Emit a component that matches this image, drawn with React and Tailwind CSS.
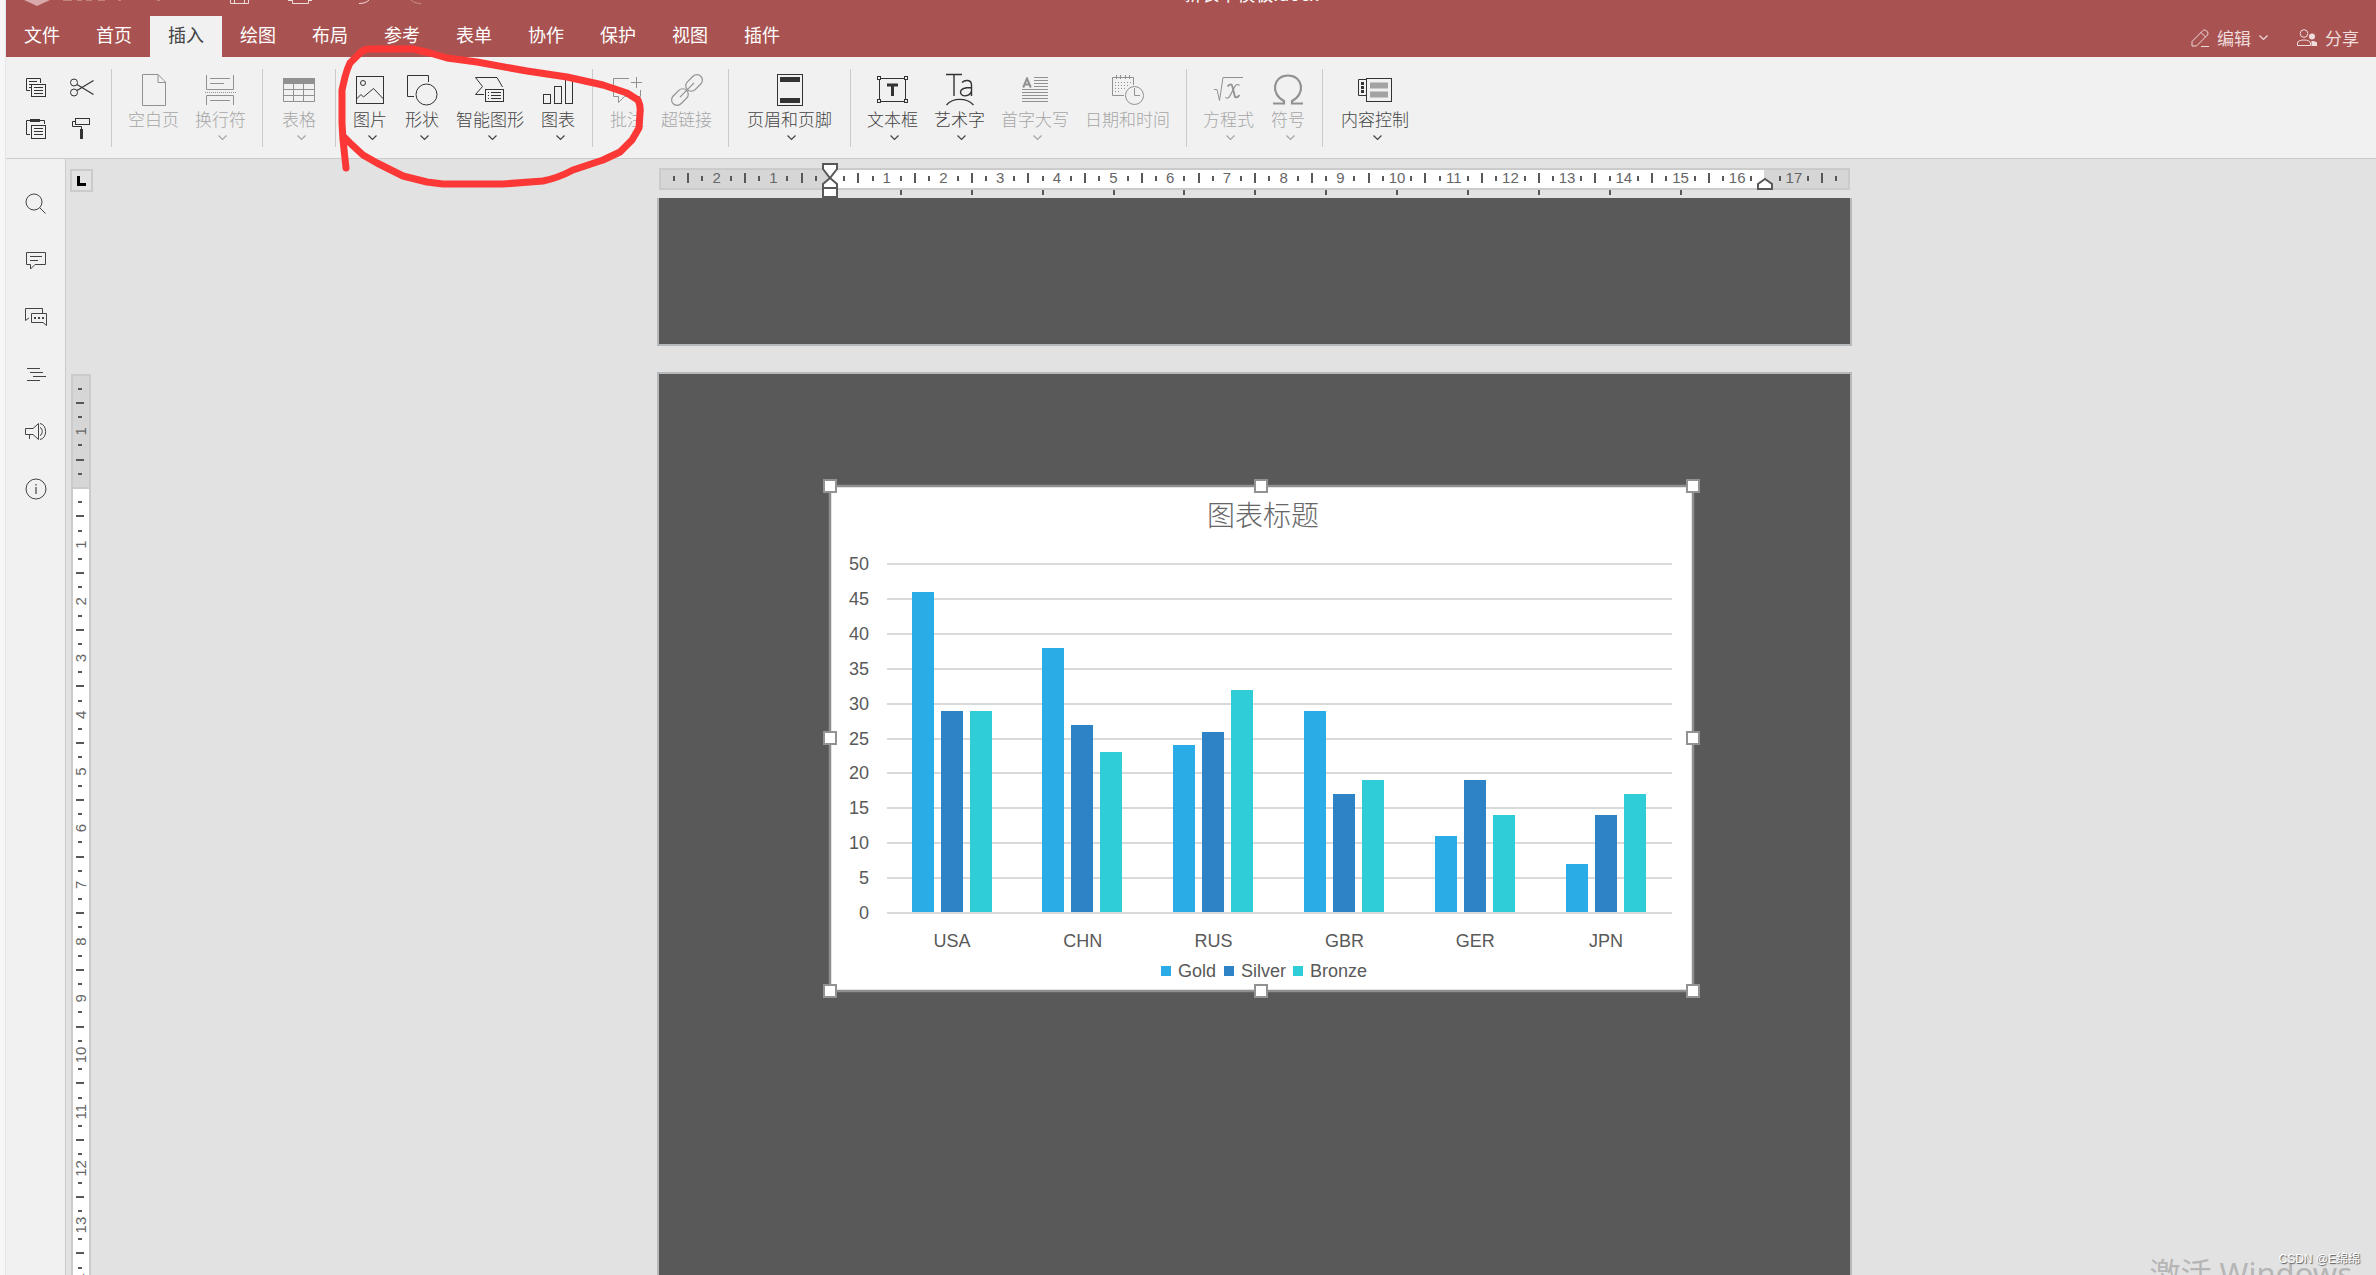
import React from "react";

const CM = 56.7;
const UI = "font-['Noto_Sans_CJK_SC',sans-serif]";

function Svg({ w, h, children, className = "" }) {
  return (
    <svg width={w} height={h} viewBox={`0 0 ${w} ${h}`} fill="none" stroke="currentColor" strokeWidth="1" className={`shrink-0 ${className}`} aria-hidden="true">
      {children}
    </svg>
  );
}

const Chevron = () => (
  <Svg w={9} h={6}><path d="M0.5 0.5 L4.5 4.5 L8.5 0.5" strokeWidth="1.2" /></Svg>
);

/* ---------- clipboard icons ---------- */
const CopyIcon = () => (
  <Svg w={20} h={20}>
    <path d="M4 12.5 H0.5 V0.5 H14.5 V5" />
    <path d="M3 3.5 H11 M3 6.5 H5 M3 9.5 H5" />
    <rect x="5.5" y="6.5" width="14" height="12" />
    <path d="M8 9.5 H17 M8 12.5 H17 M8 15.5 H17" />
  </Svg>
);
const CutIcon = () => (
  <Svg w={24} h={20}>
    <circle cx="4" cy="4.5" r="3.5" /><circle cx="4" cy="14.5" r="3.5" />
    <path d="M7 6.5 L23.5 16.5 M7 12.5 L23.5 2.5" strokeWidth="1.2" />
  </Svg>
);
const PasteIcon = () => (
  <Svg w={20} h={20}>
    <path d="M4 15.5 H0.5 V1.5 H18.5 V5" />
    <rect x="4" y="0" width="10" height="3" fill="currentColor" stroke="none" />
    <rect x="5.5" y="6.5" width="14" height="13" />
    <path d="M8 9.5 H17 M8 12.5 H17 M8 15.5 H17" />
  </Svg>
);
const RollerIcon = () => (
  <Svg w={18} h={22}>
    <rect x="3.5" y="0.5" width="14" height="6" />
    <path d="M3 3.5 H0.5 V8.5 H9.5 V11" />
    <rect x="8" y="11" width="3" height="10" fill="currentColor" stroke="none" />
  </Svg>
);

/* ---------- ribbon icons ---------- */
const BlankPage = () => (
  <Svg w={24} h={32}><path d="M0.5 0.5 H16 L23.5 8 V31.5 H0.5 Z M16 0.5 V8.5 H23.5" /></Svg>
);
const BreakIcon = () => (
  <Svg w={31} h={32}>
    <path d="M1.5 1 V15.5 H28.5 V1 M5 4.5 H25 M5 9.5 H19" />
    <path d="M0 18.5 H31" strokeDasharray="1 1" />
    <path d="M1.5 31 V21.5 H28.5 V31 M5 26.5 H25" />
  </Svg>
);
const TableIcon = () => (
  <Svg w={32} h={28}>
    <rect x="0" y="2" width="32" height="6" fill="currentColor" stroke="none" />
    <path d="M0.5 8 V25.5 H31.5 V8 M0 13.5 H32 M0 19.5 H32 M10.5 8 V25 M20.5 8 V25" />
  </Svg>
);
const PictureIcon = () => (
  <Svg w={28} h={28}>
    <rect x="0.5" y="0.5" width="27" height="27" /><circle cx="7" cy="7" r="2.5" />
    <path d="M0.5 23 L5 18.5 L7.5 21 L17.5 12.5 L27.5 23" />
  </Svg>
);
const ShapeIcon = () => (
  <Svg w={31} h={31}>
    <path d="M7 21.5 H0.5 V0.5 H21.5 V7" /><circle cx="19.5" cy="19.5" r="10.5" />
  </Svg>
);
const SmartIcon = () => (
  <Svg w={32} h={28}>
    <path d="M10 18.5 H1.5 L8.5 10.5 L1.5 1.5 H23 L28.5 11" />
    <rect x="11.5" y="13.5" width="18" height="12" />
    <path d="M14 16.5 H15 M14 19.5 H15 M14 22.5 H15 M17 16.5 H27 M17 19.5 H27 M17 22.5 H27" />
  </Svg>
);
const ChartIcon = () => (
  <Svg w={30} h={28}>
    <rect x="0.5" y="18.5" width="7" height="9" /><rect x="11.5" y="10.5" width="7" height="17" /><rect x="22.5" y="1.5" width="7" height="26" />
  </Svg>
);
const CommentIcon = () => (
  <Svg w={30} h={28}>
    <path d="M17 2.5 H1.5 V20.5 H6.5 V26.5 L12.5 20.5 H28.5 V14 M24.5 1 V12 M19 6.5 H30" />
  </Svg>
);
const LinkIcon = () => (
  <Svg w={34} h={34}>
    <g transform="rotate(-45 17 17)" strokeWidth="1.2">
      <rect x="-2.5" y="11.5" width="19" height="11" rx="5.5" />
      <rect x="17.5" y="11.5" width="19" height="11" rx="5.5" />
      <path d="M7 17 H27" />
    </g>
  </Svg>
);
const HeaderFooterIcon = () => (
  <Svg w={26} h={32}>
    <rect x="0.5" y="0.5" width="25" height="31" />
    <path d="M3 5.5 H23 M3 26.5 H23" strokeWidth="5" />
  </Svg>
);
const TextBoxIcon = () => (
  <Svg w={31} h={28}>
    <rect x="2.5" y="2.5" width="26" height="23" />
    <g className="fill-[#f1f1f1]">
      <rect x="0.5" y="0.5" width="3" height="3" /><rect x="27.5" y="0.5" width="3" height="3" />
      <rect x="0.5" y="23.5" width="3" height="3" /><rect x="27.5" y="23.5" width="3" height="3" />
    </g>
    <path d="M10 9 H21 M15.5 8 V20" strokeWidth="3" />
  </Svg>
);
const ArtIcon = () => (
  <Svg w={30} h={34}>
    <path d="M1 1.5 H17 M9 1.5 V23" strokeWidth="1.4" />
    <path d="M17 9.5 C20 6.5 26.5 6.5 26.5 12 V23 M26.5 14.5 C19 14.5 15.5 16 15.5 19 C15.5 24.5 25 24 26.5 18" strokeWidth="1.4" />
    <path d="M1.5 32 C8 24.5 21.5 24.5 28.5 32" strokeWidth="1.2" />
  </Svg>
);
const DropCapIcon = () => (
  <Svg w={26} h={26}>
    <path d="M1.2 10.5 L5 1.5 L8.800 10.5 M2.5 7.5 H7.5" strokeWidth="2" />
    <path d="M12 0.5 H26 M12 3.5 H26 M12 6.5 H26 M12 9.5 H26 M0 12.5 H26 M0 15.5 H26 M0 18.5 H26 M0 21.5 H26 M0 24.5 H26" />
  </Svg>
);
const DateIcon = () => (
  <Svg w={32} h={31}>
    <path d="M12 20.5 H0.5 V2.5 H21.5 V10 M4.5 0 V4 M8.5 0 V4 M13.5 0 V4 M17.5 0 V4" />
    <path d="M3 7.5 H20 M3 10.5 H18 M3 13.5 H14 M3 16.5 H9" strokeDasharray="1 2" />
    <circle cx="22.5" cy="20.5" r="9" /><path d="M22.5 13 V20.5 H28" />
  </Svg>
);
const EquationIcon = () => (
  <Svg w={29} h={28}>
    <path d="M0 13.5 H3 L5.5 24.5 L9 1.5 H29" />
    <path d="M13.5 10.5 C16 7 18 8 18.5 11 L20.5 19 C21 22.5 23.5 22 25.5 19" strokeWidth="1.8" />
    <path d="M25.5 9.5 C22.5 6.5 20.5 11 18.5 15 C16 20 14 24.5 11.5 21" strokeWidth="1.2" />
  </Svg>
);
const OmegaIcon = () => (
  <Svg w={30} h={32}>
    <path d="M0 29.5 H11 V27 C-3 20 0 1.5 15 1.5 C30 1.5 33 20 19 27 V29.5 H30" strokeWidth="2.2" />
  </Svg>
);
const ContentIcon = () => (
  <Svg w={34} h={24}>
    <path d="M8 17.5 H0.5 V1.5 H8" />
    <path d="M4.5 4 V7 M4.5 8 V11 M4.5 12 V15" strokeWidth="3" />
    <rect x="8.5" y="0.5" width="25" height="23" />
    <path d="M12 7.5 H30 M12 16.5 H30" className="stroke-[#a3a3a3]" strokeWidth="6" />
  </Svg>
);

const GROUPS = [
  [
    { label: "空白页", icon: <BlankPage />, off: true, plain: true },
    { label: "换行符", icon: <BreakIcon />, off: true },
  ],
  [{ label: "表格", icon: <TableIcon />, off: true }],
  [
    { label: "图片", icon: <PictureIcon /> },
    { label: "形状", icon: <ShapeIcon /> },
    { label: "智能图形", icon: <SmartIcon /> },
    { label: "图表", icon: <ChartIcon /> },
  ],
  [
    { label: "批注", icon: <CommentIcon />, off: true, plain: true },
    { label: "超链接", icon: <LinkIcon />, off: true, plain: true },
  ],
  [{ label: "页眉和页脚", icon: <HeaderFooterIcon /> }],
  [
    { label: "文本框", icon: <TextBoxIcon /> },
    { label: "艺术字", icon: <ArtIcon /> },
    { label: "首字大写", icon: <DropCapIcon />, off: true },
    { label: "日期和时间", icon: <DateIcon />, off: true, plain: true },
  ],
  [
    { label: "方程式", icon: <EquationIcon />, off: true },
    { label: "符号", icon: <OmegaIcon />, off: true },
  ],
  [{ label: "内容控制", icon: <ContentIcon /> }],
];

function RibbonButton({ label, icon, off, plain }) {
  return (
    <button type="button" disabled={off} className={`flex min-w-[36px] flex-col items-center ${off ? "text-[#a6a6a6]" : "text-[#444444]"}`}>
      <span className={`flex h-[34px] items-center ${off ? "text-[#919191]" : "text-[#333333]"}`}>{icon}</span>
      <span className="mt-0.5 whitespace-nowrap text-[17px] leading-5 font-light">{label}</span>
      {!plain && <span className="mt-1.5 pl-1"><Chevron /></span>}
    </button>
  );
}

const TABS = ["文件", "首页", "插入", "绘图", "布局", "参考", "表单", "协作", "保护", "视图", "插件"];

function Header() {
  return (
    <header className="flex h-[57px] flex-col overflow-hidden bg-[#a85351] text-white">
      <div className="relative flex h-4 shrink-0 justify-center">
        <h1 className="-mt-[19px] pl-[120px] text-[18px] leading-6">新表单模板.docx</h1>
        <svg width="440" height="6" viewBox="0 0 440 6" fill="none" stroke="#f0dcdc" className="absolute top-0 left-0" aria-hidden="true">
          <path d="M18 0 L31 6 L44 0 Z" fill="#d8a9a8" stroke="none" />
          <path d="M57 0.5 H66 M71 0.5 H76 M80 0.5 H86 M92 0.5 H99 M112 0.5 H115 M151 0.5 H154" stroke="#c28280" />
          <path d="M224.5 0 V3.5 H242.5 V0 M228.5 0 V3 M238.5 0 V3" />
          <path d="M282 0.5 H286 M302 0.5 H306 M286.5 0 V3.5 H302.5 V0" />
          <path d="M353 3.5 C358 3.5 361 2 363 0" />
          <path d="M415 3.5 C410 3.5 407 2 405 0" stroke="#c98e8d" />
        </svg>
      </div>
      <div className="flex flex-1 items-stretch justify-between">
        <nav className="flex">
          {TABS.map((t) => (
            <button key={t} type="button" className={`w-[72px] pb-1 text-[18px] ${t === "插入" ? "bg-[#f1f1f1] text-[#444444]" : "text-white"}`}>{t}</button>
          ))}
        </nav>
        <div className="flex items-center gap-[29px] pr-[17px] pt-0.5 text-[17px] text-[#efdcdc]">
          <button type="button" className="flex items-center gap-2">
            <Svg w={18} h={18}><path d="M1 17 V12.5 L12 1.5 C14 -0.5 18.5 3.5 16.5 6 L5.5 17 Z M10 3.5 L14.5 8 M10 17.5 H18" /></Svg>
            编辑<Chevron />
          </button>
          <button type="button" className="flex items-center gap-2">
            <Svg w={20} h={18}>
              <circle cx="7" cy="4.5" r="3.8" /><path d="M0.5 16.5 V14 C0.5 10 13.5 10 13.5 14 V16.5 Z" />
              <circle cx="15" cy="7.5" r="3" fill="currentColor" stroke="none" />
              <path d="M14.5 17 H20 V13.5 Q18.5 11.5 14.5 12 Z" fill="currentColor" stroke="none" />
            </Svg>
            分享
          </button>
        </div>
      </div>
    </header>
  );
}

function Toolbar() {
  return (
    <div className="flex h-[102px] border-b border-[#cbcbcb] bg-[#f1f1f1] pt-3">
      <div className="grid grid-cols-2 grid-rows-2 gap-x-5 gap-y-5 self-start pt-2 pr-[17px] pl-5 text-[#333333]">
        <button type="button" aria-label="复制" className="h-[21px] w-5"><CopyIcon /></button>
        <button type="button" aria-label="剪切" className="h-[21px] w-6"><CutIcon /></button>
        <button type="button" aria-label="粘贴" className="h-[21px] w-5"><PasteIcon /></button>
        <button type="button" aria-label="格式刷" className="h-[21px] w-6 pl-0.5"><RollerIcon /></button>
      </div>
      {GROUPS.map((g, i) => (
        <div key={i} className={`flex h-[78px] items-start gap-4 border-l border-[#cbcbcb] pt-1 ${g.length === 1 ? "px-[18px]" : "px-4"}`}>
          {g.map((b) => <RibbonButton key={b.label} {...b} />)}
        </div>
      ))}
    </div>
  );
}

const SIDE = [
  ["查找", <Svg w={21} h={21}><circle cx="9" cy="9" r="8" /><path d="M14.5 14.5 L20.5 20.5" /></Svg>],
  ["批注", <Svg w={20} h={18}><path d="M0.5 0.5 H19.5 V12.5 H9 L4.5 17 V12.5 H0.5 Z M4 4.5 H16 M4 8.5 H12" /></Svg>],
  ["聊天", <Svg w={22} h={19}><path d="M4 10 L0.5 12.5 V0.5 H17.5 V5 M6.5 5.5 H21.5 V17.5 L18 14.5 H6.5 Z" /><path d="M9 10 H19" strokeWidth="2" strokeDasharray="2 2" /></Svg>],
  ["标题", <Svg w={20} h={14}><path d="M1 0.5 H14 M4 4.5 H17 M7 8.5 H20 M1 12.5 H14" /></Svg>],
  ["反馈", <Svg w={22} h={19}><path d="M8 6.5 H0.5 V12.5 H8 L13.5 17.5 V1.5 Z M4.5 12.5 V17 M15 5.5 C18 6.5 18 12.5 15 13.5 M15 1.5 C22.5 2.5 22.5 16.5 15 17.5" /></Svg>],
  ["关于", <Svg w={22} h={22}><circle cx="11" cy="11" r="10" /><path d="M11 9 V16 M11 6 V7.5" strokeWidth="1.2" /></Svg>],
];

const INK = "#585858";

function HorizontalRuler() {
  const zero = 173, marks = [];
  for (let q = -11; q <= 71; q++) {
    if (q === 0 || q === 66) continue;
    const x = zero + (q * CM) / 4;
    if (q % 4 === 0) marks.push(<text key={q} x={x} y="21" textAnchor="middle" fontSize="15" fill="#666">{Math.abs(q / 4)}</text>);
    else marks.push(<rect key={q} x={Math.round(x) - 1} y={q % 2 ? 14 : 11} width="2" height={q % 2 ? 5 : 10} fill={INK} />);
  }
  const tabs = [];
  for (let i = 1; i <= 12; i++) tabs.push(<rect key={i} x={Math.round(zero + i * 1.25 * CM) - 1} y="28" width="2" height="5" fill={INK} />);
  return (
    <svg viewBox="0 0 1195 36" className="block w-full font-['Liberation_Sans',sans-serif]" aria-label="水平标尺">
      <rect x="2" y="6" width="1191" height="22" fill="#cbcbcb" />
      <rect x="4" y="8" width="1187" height="18" fill="#d6d6d6" />
      <rect x={zero} y="8" width="934" height="18" fill="#fff" />
      {marks}{tabs}
      <g fill="#fff" stroke={INK} strokeWidth="2">
        <path d="M166 2 H180 V7 L173 16 L166 7 Z M173 16 L180 22 V26 H166 V22 Z M166 26 H180 V35 H166 Z" />
        <path d="M1101 27 V22 L1108 17 L1115 22 V27 Z" />
      </g>
    </svg>
  );
}

function VerticalRuler() {
  const zero = 114, marks = [];
  for (let q = -7; q <= 64; q++) {
    if (q === 0) continue;
    const y = zero + (q * CM) / 4;
    if (q % 4 === 0) marks.push(<text key={q} transform={`translate(16 ${y}) rotate(-90)`} textAnchor="middle" fontSize="15" fill="#666">{Math.abs(q / 4)}</text>);
    else marks.push(<rect key={q} x={q % 2 ? 8 : 6} y={Math.round(y) - 1} width={q % 2 ? 4 : 8} height="2" fill={INK} />);
  }
  return (
    <svg width="22" height="1000" viewBox="0 0 22 1000" className="block shrink-0 font-['Liberation_Sans',sans-serif]" aria-label="垂直标尺">
      <rect x="1" y="0" width="20" height="1000" fill="#cbcbcb" />
      <rect x="3" y="2" width="16" height="111" fill="#d6d6d6" />
      <rect x="3" y="115" width="16" height="885" fill="#fff" />
      {marks}
    </svg>
  );
}

const COLORS = ["#2aace6", "#2e82c6", "#2fcdd8"];
const SERIES = ["Gold", "Silver", "Bronze"];
const DATA = [["USA", 46, 29, 29], ["CHN", 38, 27, 23], ["RUS", 24, 26, 32], ["GBR", 29, 17, 19], ["GER", 11, 19, 14], ["JPN", 7, 14, 17]];

function MedalChart() {
  const y = (v) => Math.round(434 - v * 6.98);
  const handles = [[0, 0], [431, 0], [863, 0], [0, 252], [863, 252], [0, 505], [431, 505], [863, 505]];
  const legend = [338, 401, 470];
  return (
    <svg viewBox="0 0 877 519" className="block w-full font-['Liberation_Sans',sans-serif]" fontSize="18" fill="#595959" role="img" aria-label="图表标题">
      <rect x="7" y="7" width="863" height="505" fill="#fff" stroke="#8f8f8f" strokeWidth="2.5" />
      <text x="440" y="47" textAnchor="middle" fontSize="28" className="font-['Noto_Sans_CJK_SC',sans-serif] font-light" fill="#666">图表标题</text>
      {[0, 5, 10, 15, 20, 25, 30, 35, 40, 45, 50].map((v) => (
        <g key={v}>
          <rect x="64" y={y(v) - 1} width="785" height="2" fill="#d9d9d9" />
          <text x="46" y={y(v) + 6} textAnchor="end">{v}</text>
        </g>
      ))}
      {DATA.map(([name, ...vals], i) => {
        const x = 64 + i * 130.8;
        return (
          <g key={name}>
            {vals.map((v, k) => <rect key={k} x={Math.round(x + 24.6 + k * 29)} y={y(v)} width="22" height={433 - y(v)} fill={COLORS[k]} />)}
            <text x={x + 65} y="468" textAnchor="middle">{name}</text>
          </g>
        );
      })}
      {SERIES.map((s, i) => (
        <g key={s}>
          <rect x={legend[i]} y="487" width="10" height="10" fill={COLORS[i]} />
          <text x={legend[i] + 17} y="498">{s}</text>
        </g>
      ))}
      {handles.map(([hx, hy]) => <rect key={`${hx}-${hy}`} x={hx + 1} y={hy + 1} width="12" height="12" fill="#fff" stroke="#929292" strokeWidth="2" />)}
    </svg>
  );
}

function Scribble() {
  return (
    <svg width="320" height="160" viewBox="330 35 320 160" fill="none" stroke="#fb3835" strokeWidth="7" strokeLinecap="round" strokeLinejoin="round" className="pointer-events-none absolute top-[35px] left-[330px]" aria-hidden="true">
      <path d="M346 168 L343 140 L342 123 V90 L345 77 Q347 69 350 63 L360 53 Q364 49 370 49 H413 L430 53 L447 58 L477 62 L527 71 L567 77 L603 85 L627 93 L638 100 Q641 106 640 113 L639 128 L632 140 L620 152 L603 160 L573 170 Q558 178 543 181 L503 184 H443 L427 182 L403 176 L377 163 L363 155 L350 143 L344 137" />
    </svg>
  );
}

export default function App() {
  return (
    <div className={`relative flex h-screen overflow-hidden bg-[#f7f7f7] ${UI}`}>
      <div className="w-1.5 shrink-0 border-r border-[#e6e6e6]" />
      <div className="flex min-w-0 flex-1 flex-col">
        <Header />
        <Toolbar />
        <div className="flex min-h-0 flex-1">
          <aside className="flex w-[60px] shrink-0 flex-col border-r border-[#cbcbcb] bg-[#f1f1f1] pt-4 text-[#444444]">
            {SIDE.map(([name, icon]) => (
              <button key={name} type="button" aria-label={name} className="flex h-[57px] items-center justify-center">{icon}</button>
            ))}
          </aside>
          <main className="flex min-w-0 flex-1 bg-[#e2e2e2]">
            <div className="flex w-[26px] shrink-0 flex-col items-center pl-1">
              <button type="button" aria-label="制表符" className="mt-2.5 mb-[182px] flex h-[23px] w-[23px] shrink-0 items-center justify-center border-2 border-[#cbcbcb]">
                <span className="h-2.5 w-[9px] border-b-3 border-l-3 border-black" />
              </button>
              <VerticalRuler />
            </div>
            <div className="flex min-w-0 flex-1 flex-col items-center pt-[3px] pl-[41px]">
              <div className="w-full max-w-[1195px] shrink-0"><HorizontalRuler /></div>
              <section className="h-[148px] w-full max-w-[1195px] shrink-0 border-x-2 border-b-2 border-[#b5b9bc] bg-[#595959]" />
              <section className="mt-[26px] h-[1684px] w-full max-w-[1195px] shrink-0 border-2 border-[#b5b9bc] bg-[#595959] pt-[105px] pr-[150px] pl-[164px]">
                <MedalChart />
              </section>
            </div>
          </main>
        </div>
      </div>
      <Scribble />
      <p className="pointer-events-none absolute top-[1253px] right-[24px] font-['Noto_Sans','Noto_Sans_CJK_SC',sans-serif] text-[31px] leading-10 whitespace-nowrap text-[#b5b5b5]">激活 Windows</p>
      <p className="pointer-events-none absolute right-4 bottom-2 font-['Liberation_Sans','Noto_Sans_CJK_SC',sans-serif] text-xs leading-4 text-white [text-shadow:1px_1px_1px_#555]">CSDN @E绵绵</p>
    </div>
  );
}
